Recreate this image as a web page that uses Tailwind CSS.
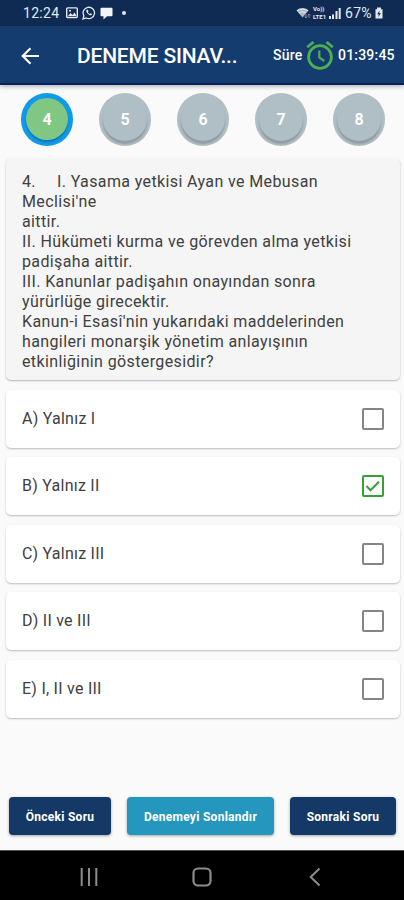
<!DOCTYPE html>
<html lang="tr">
<head>
<meta charset="utf-8">
<title>Deneme Sınavı</title>
<script src="https://cdn.jsdelivr.net/npm/@tailwindcss/browser@4"></script>
</head>
<body class="w-[404px] h-[900px] overflow-hidden bg-[#fafafa] font-['Roboto','Noto_Sans',sans-serif] flex flex-col">
<div class="h-[26px] shrink-0 bg-[#0f2b54] text-[#e6e9ef] flex items-center pl-[23px] pr-[20px]">
  <span class="text-[14px] leading-4 tracking-[0.3px] w-[37px] whitespace-nowrap">12:24</span>
  <svg class="ml-[6px]" width="12" height="12" viewBox="0 0 12 12"><rect x=".7" y=".9" width="10.6" height="9.6" rx="1" fill="none" stroke="#e6e9ef" stroke-width="1.4"/><path d="M2 9l2.5-3 2 2L8.500 5.500 10.500 9z" fill="#e6e9ef"/><circle cx="4" cy="3.800" r="1" fill="#e6e9ef"/></svg>
  <svg class="ml-[4px]" width="14" height="14" viewBox="0 0 14 14"><path d="M1 13l.9-3.200A5.700 5.700 0 1 1 4.200 12z" fill="none" stroke="#e6e9ef" stroke-width="1.300"/><path d="M4.700 3.800c-.8.700-.6 2.200.8 3.700s3 2.200 4 1.600l.6-1-1.800-.9-.8.700C6.700 7.500 6 6.800 5.900 6.300l.6-.8-.7-1.700z" fill="#e6e9ef"/></svg>
  <svg class="ml-[4px]" width="13" height="13" viewBox="0 0 13 13"><path d="M1.500.8h10a1 1 0 0 1 1 1v6.400a1 1 0 0 1-1 1H7L3.500 12.500V9.200h-2a1 1 0 0 1-1-1V1.800a1 1 0 0 1 1-1z" fill="#f4f5f8"/></svg>
  <span class="w-1 h-1 rounded-full bg-[#e6e9ef] ml-[9px]"></span>
  <span class="flex-1"></span>
  <svg width="15" height="12" viewBox="0 0 15 12"><path d="M.5 3.500C4 .3 9 .3 12.500 3.500L6.500 10.500z" fill="#aeb8c8"/><path d="M1 4c3.500-2.500 7.500-2.500 11 0M3 6c2.200-1.500 5-1.500 7 0" stroke="#e6e9ef" fill="none"/><path d="M10 7v4M8.700 9.500L10 11l1.300-1.500M13 11V7M11.800 8.500L13 7l1.300 1.500" stroke="#8d9bb1" fill="none" stroke-width=".8"/></svg>
  <span class="ml-[2px] w-[15px] flex flex-col text-[6px] leading-[8px] font-bold whitespace-nowrap"><span>Vo))</span><span>LTE1</span></span>
  <svg class="ml-[1px]" width="12" height="12" viewBox="0 0 12 12"><path d="M0 9h2v3H0zM3 7.500h2V12H3zM6.500 4h2v8h-2zM9.700 1h2v11h-2z" fill="#e6e9ef"/></svg>
  <span class="text-[14px] leading-4 tracking-[0.3px] ml-[4px] w-[27px] whitespace-nowrap">67%</span>
  <svg class="ml-[2px]" width="10" height="12" viewBox="0 0 10 12"><path d="M3 .5h4v1.700h1.500v9.300h-7V2.200H3z" fill="#e6e9ef"/><path d="M5.600 3.500L3.200 7.300h1.600L4.400 10l2.500-3.700H5.200z" fill="#0f2b54"/></svg>
</div>
<header class="h-[59px] shrink-0 bg-[#153c6f] border-b-2 border-[#082060] shadow-[0_2px_4px_rgba(0,0,0,0.25)] flex items-center pl-[21px] pt-[2px] text-white">
  <svg width="19" height="18" viewBox="0 0 19 18"><path d="M18 9H2M9.500 1.200L1.700 9l7.800 7.800" fill="none" stroke="#fff" stroke-width="2.100"/></svg>
  <h1 class="ml-[37px] w-[196px] text-[21px] leading-6 font-medium tracking-[-0.200px] whitespace-nowrap">DENEME SINAV...</h1>
  <span class="text-[14px] font-medium tracking-[0.2px] w-[31px] whitespace-nowrap">Süre</span>
  <svg class="ml-[2px]" width="28" height="30" viewBox="0 0 28 30"><g fill="none" stroke="#4caf50"><circle cx="14" cy="16" r="11.400" stroke-width="2.800"/><path d="M1.200 6.300L7.500 1M26.800 6.300L20.500 1" stroke-width="2.800"/><path d="M13.300 9.500v7l5 3.500" stroke-width="2.200"/></g></svg>
  <span class="ml-[4px] text-[14px] font-medium tracking-[0.2px] whitespace-nowrap">01:39:45</span>
</header>
<nav class="flex gap-[26px] pl-[21px] pt-[8px] shrink-0 text-white text-[16px] font-bold">
  <div class="w-[52px] h-[53px] shrink-0 rounded-full bg-[#109ae9] p-[5px]"><div class="h-[42px] rounded-full bg-[#81c784] shadow-[0_2px_2px_rgba(0,50,90,0.35)] flex items-center justify-center pt-[2px]">4</div></div>
  <div class="w-[52px] h-[53px] shrink-0 rounded-full bg-[#b0bec5] p-[4px]"><div class="h-[44px] rounded-full bg-[#b0bec5] shadow-[0_3px_2px_rgba(0,0,0,0.18)] flex items-center justify-center pt-[2px]">5</div></div>
  <div class="w-[52px] h-[53px] shrink-0 rounded-full bg-[#b0bec5] p-[4px]"><div class="h-[44px] rounded-full bg-[#b0bec5] shadow-[0_3px_2px_rgba(0,0,0,0.18)] flex items-center justify-center pt-[2px]">6</div></div>
  <div class="w-[52px] h-[53px] shrink-0 rounded-full bg-[#b0bec5] p-[4px]"><div class="h-[44px] rounded-full bg-[#b0bec5] shadow-[0_3px_2px_rgba(0,0,0,0.18)] flex items-center justify-center pt-[2px]">7</div></div>
  <div class="w-[52px] h-[53px] shrink-0 rounded-full bg-[#b0bec5] p-[4px]"><div class="h-[44px] rounded-full bg-[#b0bec5] shadow-[0_3px_2px_rgba(0,0,0,0.18)] flex items-center justify-center pt-[2px]">8</div></div>
</nav>
<main class="flex flex-col pl-[6px] pr-[4px] pt-[12px] text-[#404040] text-[16px] shrink-0">
  <section class="h-[222px] rounded-[5px] bg-[#f5f5f5] shadow-[0_1px_2px_rgba(0,0,0,0.28)] pl-[16px] pt-[14px] leading-[20px] tracking-[0.380px] whitespace-nowrap">
    <p><span class="inline-block w-[35px]">4.</span>I. Yasama yetkisi Ayan ve Mebusan</p>
    <p>Meclisi'ne</p>
    <p>aittir.</p>
    <p>II. Hükümeti kurma ve görevden alma yetkisi</p>
    <p>padişaha aittir.</p>
    <p>III. Kanunlar padişahın onayından sonra</p>
    <p>yürürlüğe girecektir.</p>
    <p>Kanun-i Esasî'nin yukarıdaki maddelerinden</p>
    <p>hangileri monarşik yönetim anlayışının</p>
    <p>etkinliğinin göstergesidir?</p>
  </section>
  <div class="mt-[9.500px] flex flex-col gap-[9.500px] tracking-[0.250px]">
    <div class="h-[58px] bg-white rounded-[5px] shadow-[0_1px_2px_rgba(0,0,0,0.25)] flex items-center justify-between pl-[16px] pr-[16px]"><span>A) Yalnız I</span><span class="w-[22px] h-[22px] border-2 border-[#858585] rounded-[2px]"></span></div>
    <div class="h-[58px] bg-white rounded-[5px] shadow-[0_1px_2px_rgba(0,0,0,0.25)] flex items-center justify-between pl-[16px] pr-[16px]"><span>B) Yalnız II</span><span class="w-[22px] h-[22px] border-2 border-[#35a038] rounded-[2px]"><svg width="18" height="18" viewBox="0 0 18 18"><path d="M2.500 9l4 4.200L15 4.800" fill="none" stroke="#35a038" stroke-width="2"/></svg></span></div>
    <div class="h-[58px] bg-white rounded-[5px] shadow-[0_1px_2px_rgba(0,0,0,0.25)] flex items-center justify-between pl-[16px] pr-[16px]"><span>C) Yalnız III</span><span class="w-[22px] h-[22px] border-2 border-[#858585] rounded-[2px]"></span></div>
    <div class="h-[58px] bg-white rounded-[5px] shadow-[0_1px_2px_rgba(0,0,0,0.25)] flex items-center justify-between pl-[16px] pr-[16px]"><span>D) II ve III</span><span class="w-[22px] h-[22px] border-2 border-[#858585] rounded-[2px]"></span></div>
    <div class="h-[58px] bg-white rounded-[5px] shadow-[0_1px_2px_rgba(0,0,0,0.25)] flex items-center justify-between pl-[16px] pr-[16px]"><span>E) I, II ve III</span><span class="w-[22px] h-[22px] border-2 border-[#858585] rounded-[2px]"></span></div>
  </div>
</main>
<div class="flex-1"></div>
<div class="flex gap-[16px] px-[9px] pb-[15px] shrink-0 text-white text-[12px] font-bold tracking-[0.280px] whitespace-nowrap">
  <button class="w-[102px] h-[38px] shrink-0 rounded-[4px] bg-[#153966] pt-px shadow-[0_1px_3px_rgba(0,0,0,0.35)]">Önceki Soru</button>
  <button class="w-[147px] h-[38px] shrink-0 rounded-[4px] bg-[#2596be] pt-px shadow-[0_1px_3px_rgba(0,0,0,0.35)]">Denemeyi Sonlandır</button>
  <button class="w-[106px] h-[38px] shrink-0 rounded-[4px] bg-[#153966] pt-px shadow-[0_1px_3px_rgba(0,0,0,0.35)]">Sonraki Soru</button>
</div>
<footer class="h-[50px] shrink-0 bg-black border-t border-[#555] flex items-center pl-[80px] pb-0 pt-[2px]">
  <svg width="18" height="20" viewBox="0 0 18 20"><path d="M1.700 1v18M9 1v18M16.300 1v18" stroke="#8c8c8c" stroke-width="2"/></svg>
  <svg class="ml-[94px]" width="20" height="20" viewBox="0 0 20 20"><rect x="1.500" y="1.500" width="17" height="17" rx="4.500" fill="none" stroke="#8c8c8c" stroke-width="2.200"/></svg>
  <svg class="ml-[97px]" width="12" height="20" viewBox="0 0 12 20"><path d="M10.500 1.500L1.700 10l8.800 8.500" fill="none" stroke="#8c8c8c" stroke-width="2"/></svg>
</footer>
</body>
</html>
